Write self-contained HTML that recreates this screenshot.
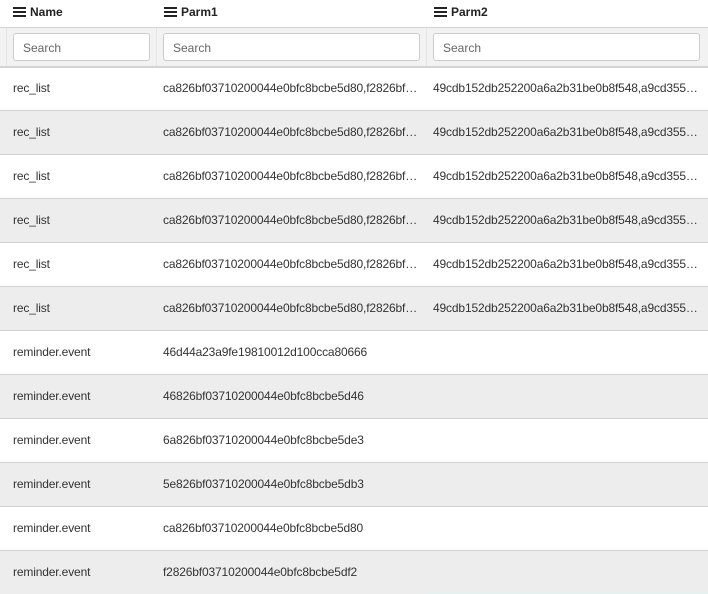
<!DOCTYPE html>
<html><head><style>
body{margin:0;width:708px;height:594px;overflow:hidden;font-family:"Liberation Sans",sans-serif;font-size:12px;color:#333;background:#fff}
.hdr{position:absolute;top:0;left:0;width:708px;height:27px;border-bottom:1px solid #d4d4d4;background:#fff}
.h{position:absolute;top:5px;font-weight:bold;font-size:12px;color:#222;display:flex;align-items:center}
.h i{display:inline-block;width:13px;height:10px;margin-right:4px;background:linear-gradient(#222 0 2px,transparent 2px 4px,#222 4px 6px,transparent 6px 8px,#222 8px 10px)}
.flt{position:absolute;top:28px;left:0;width:708px;height:38px;background:#f2f2f2;border-bottom:2px solid #d4d4d4}
.in{position:absolute;top:5px;height:28px;box-sizing:border-box;border:1px solid #ccc;border-radius:3px;background:#fff;padding:7px 9px;color:#666;font-size:12px}
.sep{position:absolute;top:0;width:1px;height:38px;background:#e4e4e4}
.row{position:absolute;left:0;width:708px;height:43px;border-bottom:1px solid #d0d0d0}
.row span{position:absolute;top:14px;white-space:nowrap;letter-spacing:-0.15px}
.g{background:#ededed}
</style></head><body>
<div class="hdr">
<div class="h" style="left:13px"><i></i>Name</div>
<div class="h" style="left:164px"><i></i>Parm1</div>
<div class="h" style="left:434px"><i></i>Parm2</div>
</div>
<div class="flt">
<div class="sep" style="left:6px"></div><div class="sep" style="left:156px"></div><div class="sep" style="left:426px"></div>
<div class="in" style="left:13px;width:137px">Search</div>
<div class="in" style="left:163px;width:257px">Search</div>
<div class="in" style="left:433px;width:267px">Search</div>
</div>
<div class="row" style="top:67px"><span style="left:13px">rec_list</span><span style="left:163px">ca826bf03710200044e0bfc8bcbe5d80,f2826bf…</span><span style="left:433px">49cdb152db252200a6a2b31be0b8f548,a9cd355…</span></div>
<div class="row g" style="top:111px"><span style="left:13px">rec_list</span><span style="left:163px">ca826bf03710200044e0bfc8bcbe5d80,f2826bf…</span><span style="left:433px">49cdb152db252200a6a2b31be0b8f548,a9cd355…</span></div>
<div class="row" style="top:155px"><span style="left:13px">rec_list</span><span style="left:163px">ca826bf03710200044e0bfc8bcbe5d80,f2826bf…</span><span style="left:433px">49cdb152db252200a6a2b31be0b8f548,a9cd355…</span></div>
<div class="row g" style="top:199px"><span style="left:13px">rec_list</span><span style="left:163px">ca826bf03710200044e0bfc8bcbe5d80,f2826bf…</span><span style="left:433px">49cdb152db252200a6a2b31be0b8f548,a9cd355…</span></div>
<div class="row" style="top:243px"><span style="left:13px">rec_list</span><span style="left:163px">ca826bf03710200044e0bfc8bcbe5d80,f2826bf…</span><span style="left:433px">49cdb152db252200a6a2b31be0b8f548,a9cd355…</span></div>
<div class="row g" style="top:287px"><span style="left:13px">rec_list</span><span style="left:163px">ca826bf03710200044e0bfc8bcbe5d80,f2826bf…</span><span style="left:433px">49cdb152db252200a6a2b31be0b8f548,a9cd355…</span></div>
<div class="row" style="top:331px"><span style="left:13px">reminder.event</span><span style="left:163px">46d44a23a9fe19810012d100cca80666</span></div>
<div class="row g" style="top:375px"><span style="left:13px">reminder.event</span><span style="left:163px">46826bf03710200044e0bfc8bcbe5d46</span></div>
<div class="row" style="top:419px"><span style="left:13px">reminder.event</span><span style="left:163px">6a826bf03710200044e0bfc8bcbe5de3</span></div>
<div class="row g" style="top:463px"><span style="left:13px">reminder.event</span><span style="left:163px">5e826bf03710200044e0bfc8bcbe5db3</span></div>
<div class="row" style="top:507px"><span style="left:13px">reminder.event</span><span style="left:163px">ca826bf03710200044e0bfc8bcbe5d80</span></div>
<div class="row g" style="top:551px;border:none;height:43px"><span style="left:13px">reminder.event</span><span style="left:163px">f2826bf03710200044e0bfc8bcbe5df2</span></div>
<div style="position:absolute;left:426px;top:591px;width:282px;height:3px;background:#e6f0ee"></div>
</body></html>
